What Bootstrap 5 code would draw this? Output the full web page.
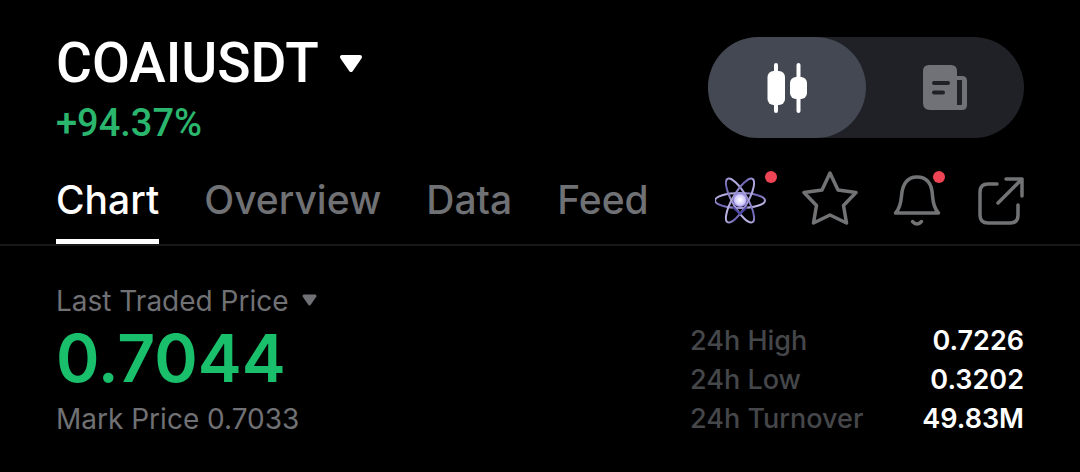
<!DOCTYPE html>
<html lang="en" data-bs-theme="dark">
<head>
<meta charset="utf-8">
<meta name="viewport" content="width=device-width, initial-scale=1">
<title>COAIUSDT</title>
<link href="https://cdn.jsdelivr.net/npm/bootstrap@5.3.0/dist/css/bootstrap.min.css" rel="stylesheet">
<style>
  body { background: #000; color: #fff; font-family: Inter, "Liberation Sans", sans-serif; overflow-x: hidden; }
  button { color: inherit; font: inherit; }
  svg { display: block; flex: none; }
  .gutter { padding-left: 56px; padding-right: 56px; }
  .top-bar { padding-top: 37px; }
  .pair, .change { font-family: Roboto, "Liberation Sans", sans-serif; font-weight: 500; }
  .pair { font-size: 55px; line-height: 52px; gap: 19px; }
  .change { font-size: 38px; line-height: 40px; color: #2bb66e; margin-top: 14px; }
  .switch { background: #1f2126; width: 316px; height: 101px; }
  .switch button { background: transparent; color: #707277; }
  .switch button.active { background: #434852; color: #fff; }
  .tab-bar { height: 103px; border-bottom: 2px solid #17181a; }
  .tabs { gap: 45px; font-size: 39px; font-weight: 500; }
  .tabs a { color: #707174; line-height: 48px; padding: 33px 0 15px; border-bottom: 5px solid transparent; text-decoration: none; }
  .tabs a.active { color: #fff; border-color: #fff; }
  .tools { color: #727375; gap: 35px; padding-top: 27px; }
  .dot { width: 12px; height: 12px; background: #ef4454; top: 1px; right: -10px; }
  .bell-dot { right: -2px; }
  .quote { padding-top: 37px; }
  .muted { color: #707174; font-size: 28px; line-height: 36px; }
  .price { color: #1abf6b; font-size: 66px; line-height: 78px; font-weight: 600; margin-bottom: 4px; }
  .stats { width: 334px; margin-top: 38px; font-size: 27px; line-height: 39px; font-weight: 500; }
  .stats th { color: #45474a; font-weight: 500; }
  .stats td { font-weight: 600; }
</style>
</head>
<body>
<header class="top-bar gutter d-flex justify-content-between align-items-start">
  <div>
    <button class="pair bg-transparent border-0 p-0 d-flex align-items-center" type="button">COAIUSDT
      <svg width="26" height="20" viewBox="0 0 26 20" aria-hidden="true"><path d="M4 4h18L13 17z" fill="currentColor" stroke="currentColor" stroke-width="4" stroke-linejoin="round"/></svg>
    </button>
    <div class="change">+94.37%</div>
  </div>
  <div class="switch d-flex rounded-pill" role="group" aria-label="View">
    <button class="active border-0 p-0 w-50 rounded-pill d-flex align-items-center justify-content-center" type="button" aria-label="Candles">
      <svg width="40" height="50" viewBox="0 0 40 50" fill="currentColor"><rect x="7" width="4" height="50" rx="2"/><rect x=".5" y="8" width="17.500" height="34" rx="6"/><rect x="29.500" width="4" height="50" rx="2"/><rect x="23" y="14" width="17" height="22" rx="6"/></svg>
    </button>
    <button class="border-0 p-0 w-50 rounded-pill d-flex align-items-center justify-content-center" type="button" aria-label="Details">
      <svg width="44" height="46" viewBox="0 0 44 46"><path d="M6 0h22q6 0 6 6v5h5q5 0 5 5v24q0 5-5 5H7q-7 0-7-7V6q0-6 6-6z" fill="currentColor"/><path d="M34 15h5v24q0 1-1 1h-4z" fill="#1f2126"/><path d="M11 18h14M11 27.500h9" stroke="#1f2126" stroke-width="4" stroke-linecap="round"/></svg>
    </button>
  </div>
</header>

<div class="tab-bar gutter d-flex justify-content-between">
  <nav class="tabs d-flex align-items-start">
    <a class="active" href="#chart">Chart</a>
    <a href="#overview">Overview</a>
    <a href="#data">Data</a>
    <a href="#feed">Feed</a>
  </nav>
  <div class="tools d-flex align-items-start">
    <button class="position-relative bg-transparent border-0 p-0" type="button" aria-label="Insights">
      <svg width="52" height="56" viewBox="0 0 52 56" fill="none" stroke-width="2">
        <defs>
          <linearGradient id="orbit" x1="0" y1="0" x2="1" y2="1"><stop stop-color="#d2cbf5"/><stop offset=".5" stop-color="#6b62b4"/><stop offset="1" stop-color="#dcd7f7"/></linearGradient>
          <radialGradient id="core"><stop stop-color="#fff"/><stop offset=".7" stop-color="#d2ccfb"/><stop offset="1" stop-color="#8a80dc"/></radialGradient>
        </defs>
        <ellipse cx="25" cy="30.500" rx="25" ry="7.500" stroke="url(#orbit)"/>
        <ellipse cx="25" cy="30.500" rx="25" ry="7.500" stroke="url(#orbit)" transform="rotate(60 25 30.500)"/>
        <ellipse cx="25" cy="30.500" rx="25" ry="7.500" stroke="url(#orbit)" transform="rotate(120 25 30.500)"/>
        <circle cx="25" cy="30" r="7" fill="url(#core)"/>
        <path d="M18 37l7 7 7-7" stroke="#4a43a0"/>
      </svg>
      <span class="dot rounded-circle position-absolute"></span>
    </button>
    <button class="bg-transparent border-0 p-0" type="button" aria-label="Favourite">
      <svg width="56" height="56" viewBox="0 0 56 56" fill="none" stroke="currentColor" stroke-width="3.500" stroke-linejoin="round"><path d="M28 3l8 17 18 2.500-12.500 13 3 17.500L28 45l-16.500 8 3-17.500L2 22.500 20 20z"/></svg>
    </button>
    <button class="position-relative bg-transparent border-0 p-0" type="button" aria-label="Alerts">
      <svg width="50" height="56" viewBox="0 0 50 56" fill="none" stroke="currentColor" stroke-width="3.500" stroke-linecap="round" stroke-linejoin="round"><path d="M2.500 43h43q-5-5-6-17C39 13.500 33.500 7 24 7S9.500 13.500 8.500 26q-1 12-6 17zM19.500 51.500q4.500 5 9 0"/></svg>
      <span class="dot bell-dot rounded-circle position-absolute"></span>
    </button>
    <button class="bg-transparent border-0 p-0" type="button" aria-label="Share">
      <svg width="46" height="56" viewBox="0 0 46 56" fill="none" stroke="currentColor" stroke-width="3.500" stroke-linecap="round" stroke-linejoin="round"><path d="M19 14h-9q-8 0-8 8v23q0 8 8 8h22q8 0 8-8V35M28 9h16v17M44 9L20 33"/></svg>
    </button>
  </div>
</div>

<main class="quote gutter d-flex justify-content-between align-items-start">
  <div>
    <button class="muted bg-transparent border-0 p-0 d-flex align-items-center gap-2" type="button">Last Traded Price
      <svg width="22" height="16" viewBox="0 0 22 16" aria-hidden="true"><path d="M7 3h11l-5.500 8z" fill="currentColor" stroke="currentColor" stroke-width="3" stroke-linejoin="round"/></svg>
    </button>
    <div class="price">0.7044</div>
    <div class="muted">Mark Price 0.7033</div>
  </div>
  <table class="stats">
    <tbody>
      <tr><th class="p-0" scope="row">24h High</th><td class="p-0 text-end">0.7226</td></tr>
      <tr><th class="p-0" scope="row">24h Low</th><td class="p-0 text-end">0.3202</td></tr>
      <tr><th class="p-0" scope="row">24h Turnover</th><td class="p-0 text-end">49.83M</td></tr>
    </tbody>
  </table>
</main>
<script src="https://cdn.jsdelivr.net/npm/bootstrap@5.3.0/dist/js/bootstrap.bundle.min.js"></script>
</body>
</html>
